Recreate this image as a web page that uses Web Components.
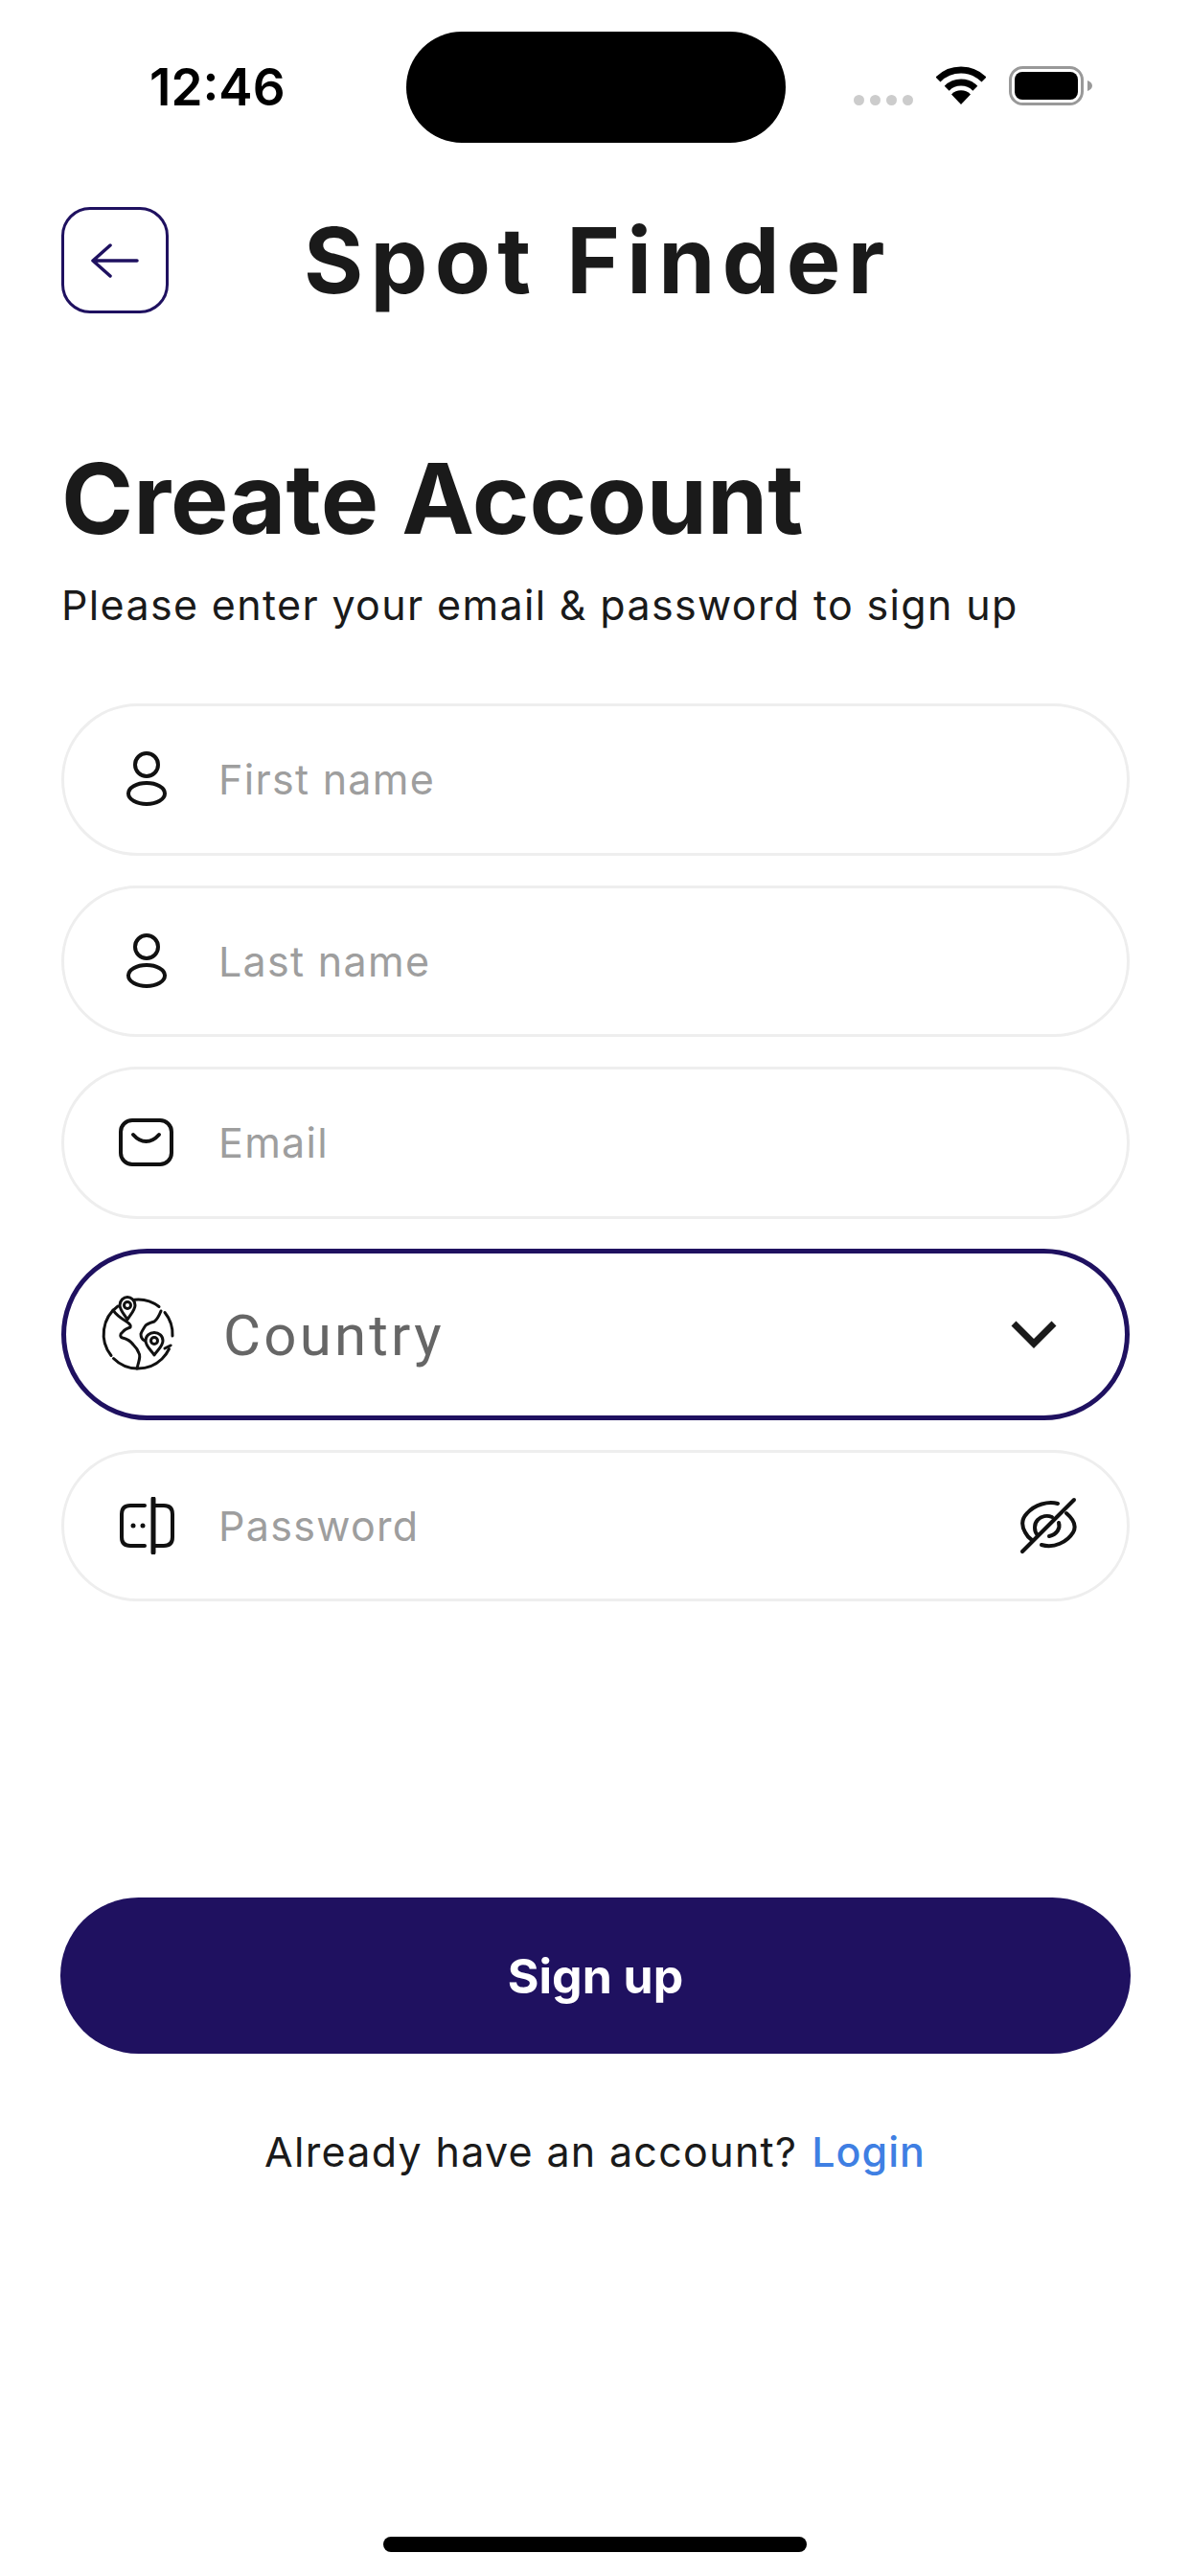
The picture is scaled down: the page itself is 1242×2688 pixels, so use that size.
<!DOCTYPE html>
<html lang="en">
<head>
<meta charset="utf-8">
<title>Spot Finder</title>
<style>
  html, body { margin: 0; background: #fff; }
  body { font-family: Inter, "Liberation Sans", sans-serif; }
</style>
</head>
<body>
<sf-screen>
  <sf-status-bar time="12:46"></sf-status-bar>
  <sf-header title="Spot Finder"></sf-header>
  <sf-intro heading="Create Account" text="Please enter your email &amp; password to sign up"></sf-intro>
  <sf-form>
    <sf-field icon="person">First name</sf-field>
    <sf-field icon="person">Last name</sf-field>
    <sf-field icon="mail">Email</sf-field>
    <sf-field icon="globe" trailing="chevron" focused>Country</sf-field>
    <sf-field icon="lock" trailing="eye-off">Password</sf-field>
  </sf-form>
  <sf-button>Sign up</sf-button>
  <sf-footer-link link="Login">Already have an account?</sf-footer-link>
  <sf-home-indicator></sf-home-indicator>
</sf-screen>

<script>
const ICONS = {
  person: `<svg width="44" height="60" viewBox="0 0 44 60" fill="none" stroke="#111" stroke-width="4">
    <circle cx="22" cy="15" r="12"/><ellipse cx="22" cy="45" rx="19" ry="11"/></svg>`,
  mail: `<svg width="58" height="50" viewBox="0 0 58 50" fill="none" stroke="#111" stroke-width="4" stroke-linecap="round">
    <rect x="2" y="2" width="53" height="46" rx="12"/><path d="M15 17c4 4.500 9 7 13.500 7s9.500-2.500 13.500-7"/></svg>`,
  lock: `<svg width="58" height="60" viewBox="0 0 58 60" fill="none" stroke="#111" stroke-width="4" stroke-linecap="round">
    <path d="M27 9H12C6 9 3 12 3 18V42C3 48 6 51 12 51H27"/>
    <path d="M36 9H47C53 9 56 12 56 18V42C56 48 53 51 47 51H36"/><path d="M36 2V58" stroke-width="5"/>
    <circle cx="15" cy="30" r="2.500" fill="#111" stroke="none"/><circle cx="25" cy="30" r="2.500" fill="#111" stroke="none"/></svg>`,
  globe: `<svg width="80" height="80" viewBox="0 0 80 80" fill="none" stroke="#111" stroke-width="3" stroke-linecap="round" stroke-linejoin="round">
    <path d="M36.500 4.200A36 36 0 0 1 62 11.500M68 17.500A36 36 0 0 1 76 42M72.500 55.500A36 36 0 0 1 65 66A36 36 0 0 1 14.500 65.500M12 62.500A36 36 0 0 1 19 11"/>
    <path d="M14 15C17 20 23 24 28 27C31 29 33 31 32 33C29 34 26 35 24 38C21 40 21 43 24 44C28 45 32 47 35 51C38 54 40 57 41 60C43 63 41 68 40 72L39 76"/>
    <path d="M64 16C62 21 60 25 57 27C54 28 50 29 48 31C46 34 44 37 43 40C43 43 45 46 47 47"/>
    <path d="M68 55L74 52"/>
    <path d="M29 25C26 20 21 15 21 10C21 5 25 1.500 29 1.500C33 1.500 37 5 37 10C37 15 32 20 29 25Z"/><circle cx="29" cy="10" r="3.500"/>
    <path d="M57 62C54 57 48 53 48 47C48 42 52 38.500 57 38.500C62 38.500 66 42 66 47C66 53 60 57 57 62Z"/><circle cx="57" cy="47" r="3.500"/></svg>`,
  chevron: `<svg width="50" height="30" viewBox="0 0 50 30" fill="none" stroke="#1a1a1a" stroke-width="7">
    <path d="M4 4L25 25L46 4"/></svg>`,
  'eye-off': `<svg width="60" height="60" viewBox="0 0 60 60" fill="none" stroke="#111" stroke-width="4" stroke-linecap="round">
    <path d="M3 57L57 3"/>
    <path d="M40 7C30 4 16 8 8 17C2 23 2 30 6 37C8 41 10 43 13 45"/>
    <path d="M49 17C56 23 60 30 56 37C50 47 36 54 23 50"/>
    <path d="M19 40C15 36 15 28 19 24C23 20 29 19 34 21"/>
    <path d="M41 27C43 33 39 39 31 41"/></svg>`
};

function shadow(el, html) {
  el.attachShadow({ mode: 'open' }).innerHTML = html;
}

class SfScreen extends HTMLElement {
  constructor() {
    super();
    shadow(this, `<style>
      :host { display: flex; flex-direction: column; width: 1242px; height: 2688px; background: #fff; overflow: hidden; }
    </style><slot></slot>`);
  }
}

class SfStatusBar extends HTMLElement {
  connectedCallback() {
    shadow(this, `<style>
      :host { display: grid; grid-template-columns: 424px 396px 1fr; height: 116px; margin-top: 33px; }
      .time { padding-left: 156px; font: 600 53px/116px Inter, sans-serif; color: #000; }
      .island { background: #000; border-radius: 58px; }
      .right { display: flex; align-items: flex-start; padding: 36px 0 0 71px; }
      .dots { display: flex; gap: 6px; margin-top: 30px; }
      .dots i { width: 11px; height: 11px; border-radius: 50%; background: #ccc; }
      .wifi { margin-left: 24px; }
      .battery { margin-left: 24px; }
    </style>
    <div class="time">${this.getAttribute('time')}</div>
    <div class="island"></div>
    <div class="right">
      <div class="dots"><i></i><i></i><i></i><i></i></div>
      <svg class="wifi" width="52" height="40" viewBox="0 0 52 40">
        <g fill="none" stroke="#000" stroke-width="7">
          <path d="M2 14A34 34 0 0 1 50 14"/><path d="M11.200 23.200A21 21 0 0 1 40.800 23.200"/>
        </g>
        <path d="M26 40L16 29.500A14 14 0 0 1 36 29.500Z"/>
      </svg>
      <svg class="battery" width="88" height="41" viewBox="0 0 88 41">
        <rect x="1.500" y="1.500" width="75" height="38" rx="13" fill="none" stroke="#999" stroke-width="3"/>
        <rect x="6" y="6" width="66" height="29" rx="8"/>
        <path d="M82 15C85 16 87 18 87 20.500C87 23 85 25 82 26Z" fill="#999"/>
      </svg>
    </div>`);
  }
}

class SfHeader extends HTMLElement {
  connectedCallback() {
    shadow(this, `<style>
      :host { display: flex; align-items: center; gap: 141px; margin: 67px 0 0 64px; }
      .back { box-sizing: border-box; display: flex; align-items: center; justify-content: center; width: 112px; height: 111px; border: 3.5px solid #1f1160; border-radius: 30px; }
      h1 { margin: 0; font: 700 95px/100px Inter, sans-serif; letter-spacing: 7.3px; color: #1a1a1a; }
    </style>
    <div class="back">
      <svg width="50" height="36" viewBox="0 0 50 36" fill="none" stroke="#1f1160" stroke-width="3.500" stroke-linecap="round" stroke-linejoin="round">
        <path d="M2 18H48M20 2L2 18L20 34"/>
      </svg>
    </div>
    <h1>${this.getAttribute('title')}</h1>`);
  }
}

class SfIntro extends HTMLElement {
  connectedCallback() {
    shadow(this, `<style>
      :host { display: block; padding-left: 64px; margin-top: 144px; color: #1a1a1a; }
      h2 { margin: 0 0 34px; font: 700 101.6px/100px Inter, sans-serif; }
      p { margin: 0; font: 400 43px/52px Inter, sans-serif; letter-spacing: 1.35px; }
    </style>
    <h2>${this.getAttribute('heading')}</h2>
    <p>${this.getAttribute('text').replace('&', '&amp;')}</p>`);
  }
}

class SfForm extends HTMLElement {
  constructor() {
    super();
    shadow(this, `<style>
      :host { display: flex; flex-direction: column; gap: 31px; margin: 77px 63px 0 64px; }
    </style><slot></slot>`);
  }
}

class SfField extends HTMLElement {
  connectedCallback() {
    const trailing = this.getAttribute('trailing');
    shadow(this, `<style>
      :host { box-sizing: border-box; display: flex; align-items: center; height: 158.5px; padding: 0 52px 0 57px; border: 3px solid #eee; border-radius: 90px; }
      :host([focused]) { height: 179px; padding: 0 70px 0 35px; border: 5px solid #1f1160; }
      .icon { display: flex; justify-content: center; width: 58px; flex: none; margin-right: 46px; }
      :host([focused]) .icon { width: 80px; margin-right: 49px; }
      .label { flex: 1; font: 400 43px/52px Inter, sans-serif; letter-spacing: 1.3px; color: #9e9e9e; }
      :host([focused]) .label { position: relative; top: 2px; font: 400 60px/64px Roboto, sans-serif; letter-spacing: 3.2px; color: #666; }
      .end { display: flex; }
    </style>
    <span class="icon">${ICONS[this.getAttribute('icon')]}</span>
    <span class="label"><slot></slot></span>
    ${trailing ? `<span class="end">${ICONS[trailing]}</span>` : ''}`);
  }
}

class SfButton extends HTMLElement {
  constructor() {
    super();
    shadow(this, `<style>
      :host { display: flex; align-items: center; justify-content: center; height: 163px; margin: 309px 62px 0 63px; background: #1f1160; border-radius: 82px; color: #fff; font: 700 50px/60px Inter, sans-serif; }
    </style><slot></slot>`);
  }
}

class SfFooterLink extends HTMLElement {
  connectedCallback() {
    shadow(this, `<style>
      :host { display: flex; justify-content: center; gap: 15px; margin-top: 76px; font: 400 43px/52px Inter, sans-serif; letter-spacing: 1.3px; color: #1a1a1a; }
      a { color: #3f7fe3; font-weight: 500; letter-spacing: 1px; text-decoration: none; }
    </style>
    <span><slot></slot></span><a href="#">${this.getAttribute('link')}</a>`);
  }
}

class SfHomeIndicator extends HTMLElement {
  constructor() {
    super();
    shadow(this, `<style>
      :host { display: block; align-self: center; width: 442px; height: 16px; margin-top: 376px; background: #000; border-radius: 8px; }
    </style>`);
  }
}

customElements.define('sf-screen', SfScreen);
customElements.define('sf-status-bar', SfStatusBar);
customElements.define('sf-header', SfHeader);
customElements.define('sf-intro', SfIntro);
customElements.define('sf-form', SfForm);
customElements.define('sf-field', SfField);
customElements.define('sf-button', SfButton);
customElements.define('sf-footer-link', SfFooterLink);
customElements.define('sf-home-indicator', SfHomeIndicator);
</script>
</body>
</html>
